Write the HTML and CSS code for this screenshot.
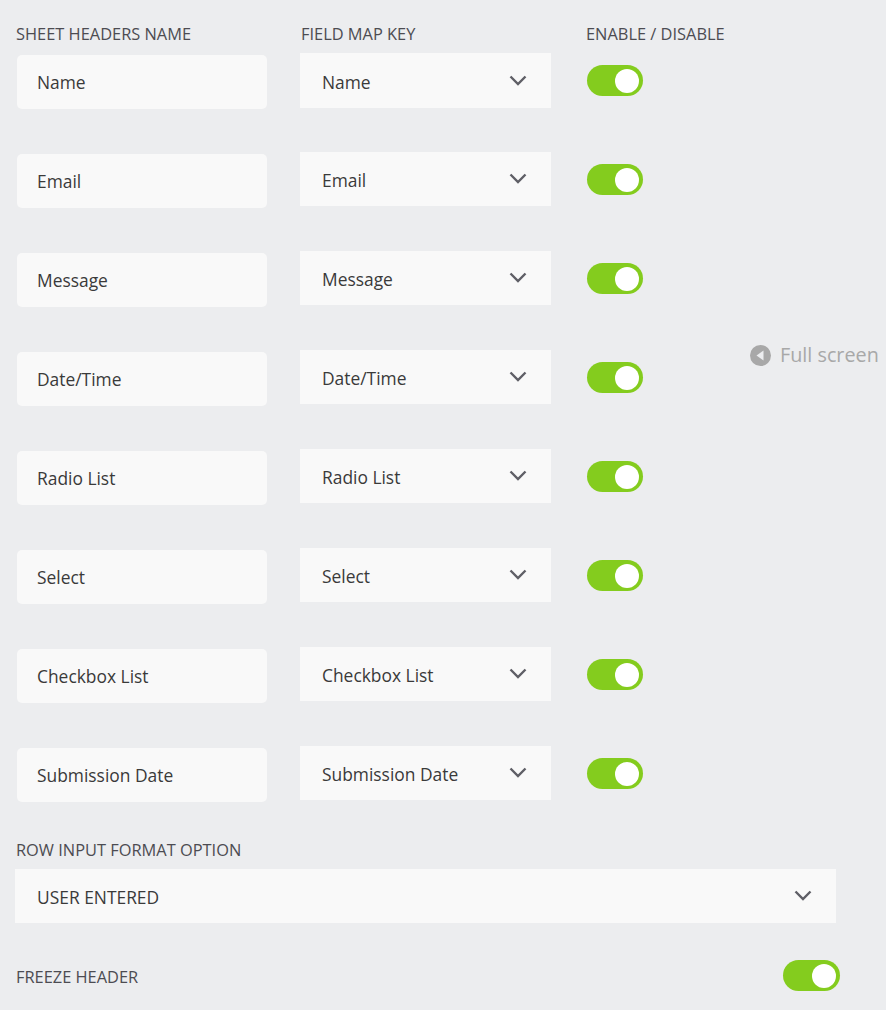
FILE: index.html
```html
<!DOCTYPE html>
<html lang="en">
<head>
<meta charset="utf-8">
<title>Sheet field map</title>
<link rel="stylesheet" href="styles.css">
</head>
<body>
<main class="panel">
  <div class="grid heads">
    <div class="label">SHEET HEADERS NAME</div>
    <div class="label">FIELD MAP KEY</div>
    <div class="label">ENABLE / DISABLE</div>
  </div>
  <div class="rows">
    <div class="grid row"><div class="input">Name</div><div class="select"><span>Name</span><svg class="chev" viewBox="0 0 18 11"><path d="M1.5 1.5 9 9l7.5-7.5"/></svg></div><div class="switch"><i></i></div></div>
    <div class="grid row"><div class="input">Email</div><div class="select"><span>Email</span><svg class="chev" viewBox="0 0 18 11"><path d="M1.5 1.5 9 9l7.5-7.5"/></svg></div><div class="switch"><i></i></div></div>
    <div class="grid row"><div class="input">Message</div><div class="select"><span>Message</span><svg class="chev" viewBox="0 0 18 11"><path d="M1.5 1.5 9 9l7.5-7.5"/></svg></div><div class="switch"><i></i></div></div>
    <div class="grid row"><div class="input">Date/Time</div><div class="select"><span>Date/Time</span><svg class="chev" viewBox="0 0 18 11"><path d="M1.5 1.5 9 9l7.5-7.5"/></svg></div><div class="switch"><i></i></div></div>
    <div class="grid row"><div class="input">Radio List</div><div class="select"><span>Radio List</span><svg class="chev" viewBox="0 0 18 11"><path d="M1.5 1.5 9 9l7.5-7.5"/></svg></div><div class="switch"><i></i></div></div>
    <div class="grid row"><div class="input">Select</div><div class="select"><span>Select</span><svg class="chev" viewBox="0 0 18 11"><path d="M1.5 1.5 9 9l7.5-7.5"/></svg></div><div class="switch"><i></i></div></div>
    <div class="grid row"><div class="input">Checkbox List</div><div class="select"><span>Checkbox List</span><svg class="chev" viewBox="0 0 18 11"><path d="M1.5 1.5 9 9l7.5-7.5"/></svg></div><div class="switch"><i></i></div></div>
    <div class="grid row"><div class="input">Submission Date</div><div class="select"><span>Submission Date</span><svg class="chev" viewBox="0 0 18 11"><path d="M1.5 1.5 9 9l7.5-7.5"/></svg></div><div class="switch"><i></i></div></div>
  </div>
  <div class="label format-label">ROW INPUT FORMAT OPTION</div>
  <div class="select wide"><span>USER ENTERED</span><svg class="chev" viewBox="0 0 18 11"><path d="M1.5 1.5 9 9l7.5-7.5"/></svg></div>
  <div class="freeze">
    <div class="label">FREEZE HEADER</div>
    <div class="switch"><i></i></div>
  </div>
</main>
<div class="fullscreen">
  <svg viewBox="0 0 21 21"><circle cx="10.5" cy="10.5" r="10.5"/><path class="tri" d="M13.5 5.5v10l-7-5z"/></svg>
  <span>Full screen</span>
</div>
</body>
</html>
```
FILE: styles.css
```css
* { box-sizing: border-box; }
html, body { margin: 0; height: 100%; }
body {
  background: #ecedef;
  color: #3a3a3a;
  font-family: "Open Sans", "Noto Sans", sans-serif;
  font-size: 17.4px;
  overflow: hidden;
  position: relative;
}
.panel { padding: 23px 0 0 15px; width: 846px; }
.grid { display: grid; grid-template-columns: 285px 285px 285px; }
.label { font-size: 16.4px; line-height: 22px; color: #4c4c52; padding-left: 1px; }
.rows { margin-top: 8px; }
.row { height: 99px; align-items: start; }
.input {
  width: 250px; height: 54px; margin: 2px 0 0 2px;
  background: #f9f9f9; border-radius: 5px;
  padding-left: 20px; line-height: 54px; color: #3a3a3a;
}
.select {
  width: 251px; height: 54px;
  background: #f9f9f9;
  display: flex; align-items: center; justify-content: space-between;
  padding: 2px 24px 0 22px; color: #3a3a3a;
}
.row:first-child .select { height: 55px; }
.chev { width: 18px; height: 11px; fill: none; stroke: #5f5f66; stroke-width: 2.4; margin-top: -3px; }
.switch {
  width: 56px; height: 31px; margin: 12px 0 0 2px;
  background: #84cc1e; border-radius: 16px;
  display: flex; align-items: center; justify-content: flex-end; padding-right: 4px;
}
.switch i { display: block; width: 24px; height: 24px; border-radius: 50%; background: #fff; }
.format-label { margin-top: -6px; }
.wide { width: 821px; margin-top: 8px; }
.freeze { display: flex; justify-content: space-between; align-items: center; margin-top: 37px; height: 31px; width: 825px; }
.freeze .label { margin-top: 2px; }
.freeze .switch { margin: 0; width: 57px; }
.fullscreen {
  position: absolute; left: 750px; top: 342px;
  display: flex; align-items: center; gap: 9px;
  color: #a8a8a8; font-size: 19.8px; line-height: 26px;
}
.fullscreen svg { width: 21px; height: 21px; fill: #a8a8a8; }
.fullscreen .tri { fill: #ecedef; }
```
